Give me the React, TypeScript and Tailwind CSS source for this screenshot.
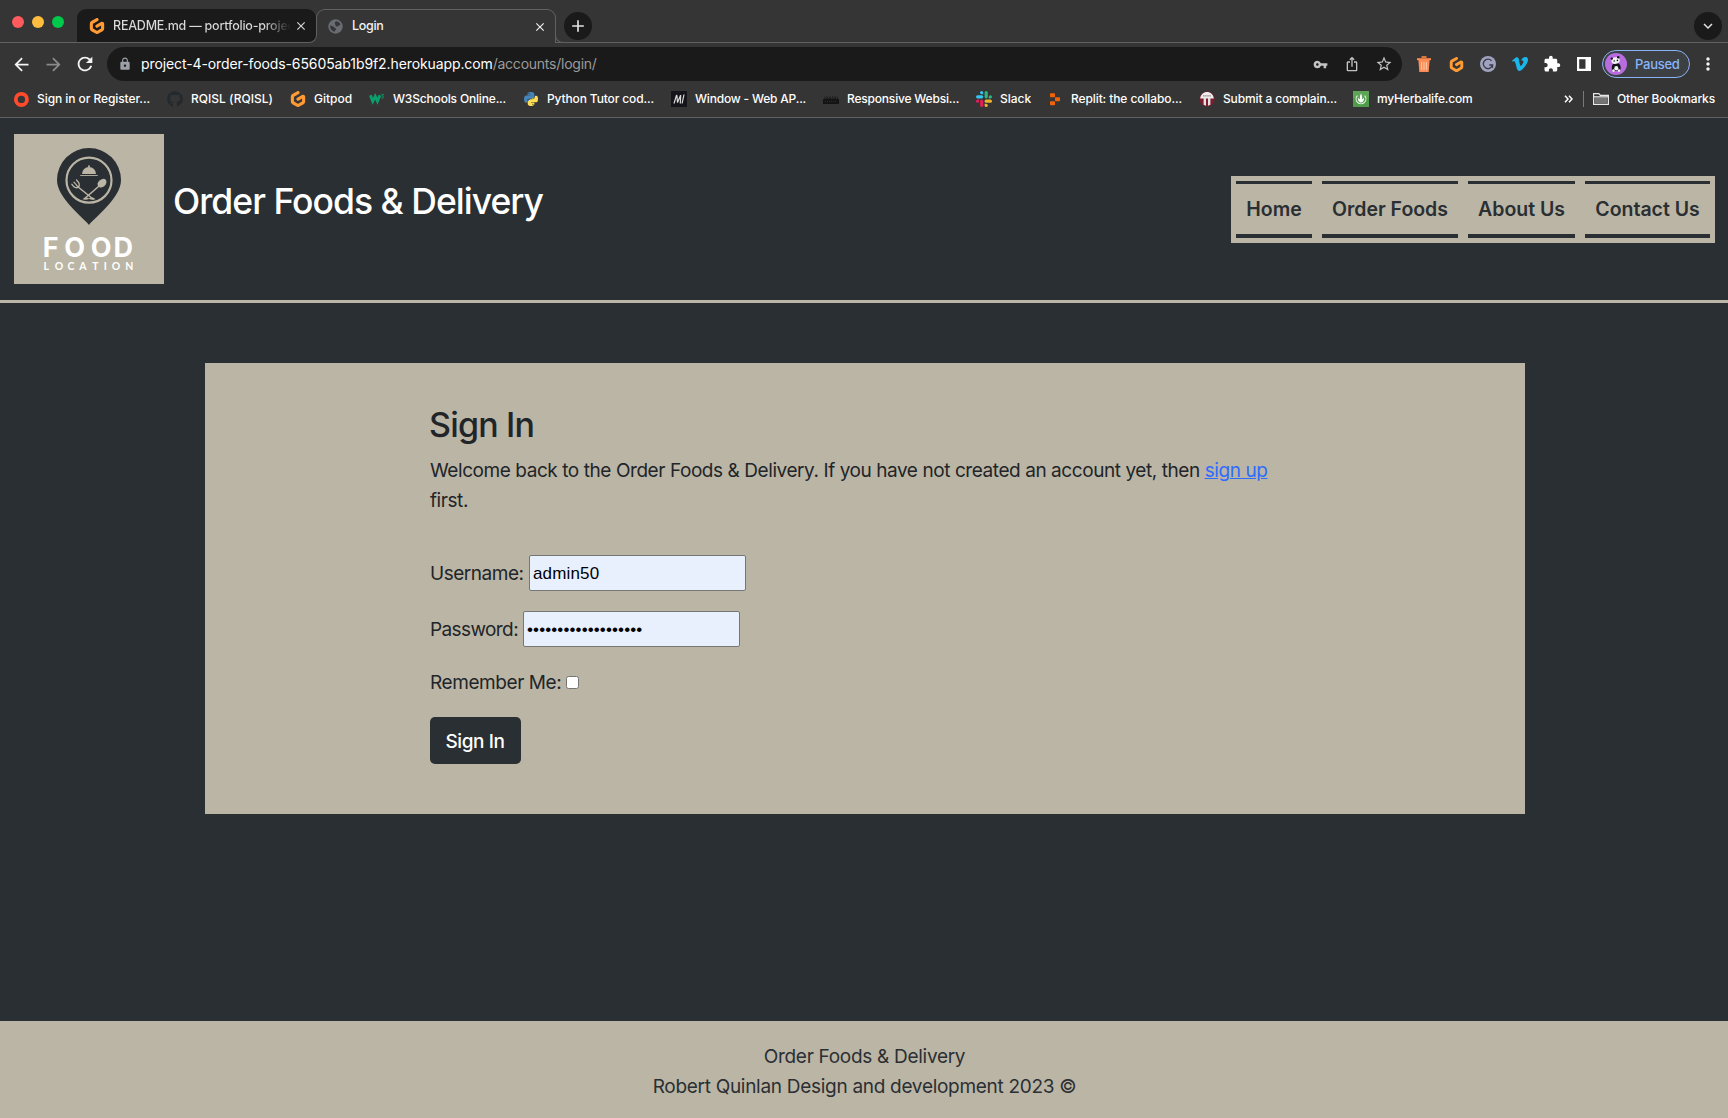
import type { ReactNode } from "react";
import {
  MdArrowBack,
  MdArrowForward,
  MdRefresh,
  MdLock,
  MdVpnKey,
  MdIosShare,
  MdStarBorder,
  MdExtension,
  MdMoreVert,
  MdClose,
  MdAdd,
  MdKeyboardArrowDown,
} from "react-icons/md";
import { FaGithub, FaPython } from "react-icons/fa";
import { SiGitpod, SiVimeo } from "react-icons/si";

function Gitpod({ size = 16 }: { size?: number }) {
  return <SiGitpod size={size} color="#ff9a35" />;
}

function GlobeIcon() {
  return (
    <svg width="15" height="15" viewBox="0 0 15 15">
      <circle cx="7.5" cy="7.5" r="7.2" fill="#696c71" />
      <path
        d="M8 2.200c2 .2 3.800 1.400 4.600 3.300-.7.9-1.800.6-2.300 1.400-.4.800-1.500.9-2.300.4-.7-.5-.3-1.400-.9-2C6.500 4.600 7 3 8 2.200zM2 6.800c1.500 0 3.200.4 4 1.500.7.9 1.900.7 2.100 1.700.2.900-1 1-1.200 1.900-.1.500-.3.800-.9.800C3.700 12 2 9.800 2 6.800z"
        fill="#35363a"
      />
    </svg>
  );
}

function OperaIcon() {
  return (
    <svg width="16" height="16" viewBox="0 0 16 16" fill="none">
      <circle cx="8.4" cy="8.4" r="5.6" stroke="#ff4b2b" strokeWidth="3.8" />
    </svg>
  );
}

function W3Icon() {
  return (
    <svg width="17" height="16" viewBox="0 0 17 16" fill="none" stroke="#0aa06e">
      <path d="M1.400 4 4 10.400 6.600 5.200 9 10.400 11.600 4" strokeWidth="3" />
      <path d="M13 3.200h2.400L14 5c1 0 1.500.5 1.500 1.100s-.6 1.200-1.400 1.200-1-.3-1.200-.6" strokeWidth=".9" />
    </svg>
  );
}

function PythonIcon() {
  return (
    <svg width="16" height="16" viewBox="0 0 16 16">
      <defs>
        <linearGradient id="py" x1="0.2" y1="0" x2="0.8" y2="1">
          <stop offset="0.5" stopColor="#4584b6" />
          <stop offset="0.5" stopColor="#ffde57" />
        </linearGradient>
      </defs>
      <FaPython size={16} fill="url(#py)" />
    </svg>
  );
}

function MdnIcon() {
  return (
    <svg width="16" height="16" viewBox="0 0 16 16">
      <rect width="16" height="16" fill="#15141a" />
      <path d="M3 12.500 5.600 3.800M5.900 4.200 6.500 11.600M6.500 11.400 9.600 4.200M9.700 4 9.300 12.500M13 3.500l-1.900 9" fill="none" stroke="#d8d8d8" strokeWidth="1.200" />
    </svg>
  );
}

function DarkBarsIcon() {
  return (
    <svg width="16" height="16" viewBox="0 0 16 16">
      <path d="M1 8V5.500h1V7h1V5.500h2V7h1V5.500h2V7h1V5h1v2h1V5.500h2V7h1V5.500h1V8z" fill="#222" />
      <rect x="0" y="8" width="16" height="5" fill="#141414" />
      <path d="M2 10.500h12" stroke="#2c2c2c" strokeDasharray="1 1" />
    </svg>
  );
}

function SlackIcon() {
  return (
    <svg width="16" height="16" viewBox="0 0 16 16">
      <g fill="#36c5f0">
        <rect x="0" y="4.200" width="7.200" height="3.200" rx="1.600" />
        <path d="M5.600 0a1.600 1.600 0 0 1 1.600 1.600v1.600H5.600a1.600 1.600 0 0 1 0-3.200z" />
      </g>
      <g fill="#2eb67d">
        <rect x="8.600" y="0" width="3.200" height="7.400" rx="1.600" />
        <path d="M12.800 7.400V5.800a1.600 1.600 0 1 1 1.600 1.600z" />
      </g>
      <g fill="#ecb22e">
        <rect x="8.600" y="8.600" width="7.400" height="3.200" rx="1.600" />
        <path d="M8.600 12.800h1.600a1.600 1.600 0 1 1-1.600 1.600z" />
      </g>
      <g fill="#e01e5a">
        <rect x="4.100" y="8.600" width="3.200" height="7.400" rx="1.600" />
        <path d="M3.200 8.600v1.600a1.600 1.600 0 1 1-1.600-1.600z" />
      </g>
    </svg>
  );
}

function ReplitIcon() {
  return (
    <svg width="16" height="16" viewBox="0 0 16 16" fill="#f26207">
      <rect x="3" y="2.300" width="5" height="4" rx=".7" />
      <rect x="8" y="6.300" width="5" height="4" rx=".7" />
      <rect x="3" y="10.300" width="5" height="4" rx=".7" />
    </svg>
  );
}

function ComplaintIcon() {
  return (
    <svg width="16" height="16" viewBox="0 0 16 16">
      <circle cx="8" cy="8" r="7.600" fill="#7d1c2e" />
      <path d="M1.200 7.400C1.600 3.400 4.600.900 8 .900s6.400 2.500 6.800 6.500z" fill="#eee" />
      <path d="M4 4.800h8" stroke="#a7868c" strokeWidth="1.200" strokeDasharray="1.600 .5" />
      <path d="M4.600 7h2.400v7.800l-2.400-1zM9 7h2.400v6.800L9 14.800z" fill="#e2e2e2" />
    </svg>
  );
}

function HerbalifeIcon() {
  return (
    <svg width="16" height="16" viewBox="0 0 16 16">
      <rect width="16" height="16" fill="#4f9c4a" />
      <rect width="16" height="7" fill="#5da657" />
      <path d="M4.400 4.600a4.900 4.900 0 1 0 7.200 0" fill="none" stroke="#e8f5e6" strokeWidth="1.100" />
      <path d="M8 2.500c1.500 2.500 1.500 6 0 8.500-1.500-2.500-1.500-6 0-8.500zM4.900 7c1.500.3 2.600 1.800 3.100 4.200C8.500 8.800 9.600 7.300 11.100 7c.1 2.500-1 4.200-3.100 4.700-2.100-.5-3.200-2.200-3.100-4.700z" fill="#fff" />
    </svg>
  );
}

function FolderIcon() {
  return (
    <svg width="16" height="14" viewBox="0 0 16 14" fill="none" stroke="#e9e9e9" strokeWidth="1.200">
      <path d="M.6 12.400V1.600h5.200l1.600 1.800h8v9z" />
      <path d="M1.600 5.400h12.800v6.200H1.600z" fill="#757575" stroke="none" />
      <path d="M.6 4.800h14.800" />
    </svg>
  );
}

function TrashIcon() {
  return (
    <svg width="16" height="18" viewBox="0 0 16 18">
      <path d="M1 3.200h14v2H1z" fill="#ff8a4c" />
      <path d="M5.500 1h5v2.200h-5z" fill="#d97742" />
      <path d="M2.400 5h11.200l-.9 12H3.300z" fill="#fa8d58" />
      <path d="M5.600 7v8M8 7v8M10.400 7v8" stroke="#ffc3a0" strokeWidth="1.100" />
    </svg>
  );
}

function GrammarlyIcon() {
  return (
    <svg width="16" height="16" viewBox="0 0 16 16" fill="none">
      <circle cx="8" cy="8" r="8" fill="#a0a3bd" />
      <path d="M11.600 4.800A4.700 4.700 0 1 0 12.600 9H9.200" stroke="#3b3d4c" strokeWidth="1.300" />
      <path d="M12.500 9v2.900" stroke="#3b3d4c" strokeWidth="1.200" />
    </svg>
  );
}

function SidePanelIcon() {
  return (
    <svg width="14" height="14" viewBox="0 0 14 14">
      <path d="M0 0h14v14H0zM2.200 2.200v9.600h6.300V2.200z" fill="#fff" fillRule="evenodd" />
    </svg>
  );
}

function PandaAvatar() {
  return (
    <svg width="22" height="22" viewBox="0 0 22 22">
      <circle cx="11" cy="11" r="11" fill="#b96be0" />
      <path d="M6.800 14c0-2.500 2-4 4.700-4s4.200 2 4.200 4.500l-.5 3.500H7z" fill="#15131a" />
      <ellipse cx="11.300" cy="15.300" rx="2" ry="2.200" fill="#f5f5f5" />
      <ellipse cx="10.600" cy="7.600" rx="4.200" ry="3.300" fill="#f3f3f3" transform="rotate(-10 10.600 7.600)" />
      <circle cx="6.800" cy="5.600" r="1.200" fill="#15131a" />
      <circle cx="13.200" cy="4.300" r="1.200" fill="#15131a" />
      <circle cx="9.200" cy="8" r=".8" fill="#15131a" />
      <circle cx="12.400" cy="7.400" r=".8" fill="#15131a" />
      <circle cx="8.500" cy="17.600" r="1.300" fill="#f3f3f3" />
      <circle cx="14" cy="17.600" r="1.300" fill="#f3f3f3" />
    </svg>
  );
}

function FoodLogo() {
  return (
    <svg width="150" height="150" viewBox="0 0 150 150" className="block">
      <rect width="150" height="150" fill="#bbb5a5" />
      <path d="M75 91C69 83 43 64 43 46a32 32 0 0 1 64 0c0 18-26 37-32 45z" fill="#2a2f33" />
      <circle cx="75" cy="46.200" r="22.500" fill="none" stroke="#bbb5a5" strokeWidth="2.200" />
      <g fill="#bbb5a5">
        <path d="M68 39.900a7 7 0 0 1 14 0z" />
        <circle cx="75" cy="32.200" r="1" />
        <rect x="66.200" y="41" width="17.600" height=".9" />
        <ellipse cx="88" cy="49.200" rx="5" ry="3.700" transform="rotate(-42 88 49.200)" />
        <path d="M68.500 65.200c2-2.300 4.500-2.300 6.500-.7 2-1.600 4.500-1.600 6.500.7-2 .7-4.500.6-6.500-.1-2 .7-4.500.8-6.500.1z" />
      </g>
      <g fill="none" stroke="#bbb5a5" strokeLinecap="round">
        <path d="M84.500 52.500 71 64.200" strokeWidth="1.500" />
        <path d="M63.500 52.500 79 65" strokeWidth="1.500" />
        <path d="M57.800 50.200c2 3.200 4.400 4.500 6.600 2.800 1.700-1.700 1-4.200-1.900-7M60 48.200l3.600 4.200" strokeWidth="1.300" />
      </g>
      <g fill="#ffffff">
        <text x="28.800 50.200 76.800 99.600" y="122.800" fontSize="27" fontWeight="700" fontFamily="Inter, sans-serif">
          FOOD
        </text>
        <text x="29.600 40.800 53.400 65.200 78.200 89.800 97.800 111.200" y="135.800" fontSize="10.500" fontWeight="700" fontFamily="Lato, sans-serif">
          LOCATION
        </text>
      </g>
    </svg>
  );
}

function Slot({ children }: { children: ReactNode }) {
  return <div className="flex w-8 shrink-0 items-center justify-center">{children}</div>;
}

function TabStrip() {
  return (
    <div className="flex h-[43px] items-end border-b border-[#606163]">
      <div className="flex h-full w-[77px] gap-2 pt-4 pl-3">
        <span className="size-3 rounded-full bg-[#ff5b5c]" />
        <span className="size-3 rounded-full bg-[#ffbd3f]" />
        <span className="size-3 rounded-full bg-[#00ca4b]" />
      </div>

      <div className="relative flex h-[33px] w-[239px] items-center rounded-t-[9px] bg-[#1a1a1a] pl-3 text-[12.5px] font-medium text-[#d6d6d6]">
        <Gitpod />
        <span className="mt-px ml-2 w-[178px] overflow-hidden bg-linear-to-r from-[#dadada] from-85% to-[#1a1a1a] bg-clip-text tracking-[-0.22px] whitespace-nowrap text-transparent">
          README.md — portfolio-project
        </span>
        <MdClose size={14} className="mt-px ml-[3px]" />
      </div>

      <div className="relative z-10 -mb-px flex h-[34px] w-[240px] items-center rounded-t-[9px] border-x border-t border-[#606163] bg-[#353535] pl-[11px] text-[12.5px] font-medium text-[#f1f1f1]">
        <span className="absolute bottom-0 -left-[9px] size-[9px] bg-[#353535]">
          <span className="block size-full rounded-br-[8px] border-r border-b border-[#606163] bg-[#1a1a1a]" />
        </span>
        <span className="absolute -right-[9px] bottom-0 size-[9px] rounded-bl-[8px] border-b border-l border-[#606163] bg-[#353535]" />
        <GlobeIcon />
        <span className="ml-[9px] flex-1 tracking-[-0.3px]">Login</span>
        <MdClose size={14} className="mr-2" />
      </div>

      <div className="mb-0.5 ml-2 flex size-7 items-center justify-center rounded-full bg-[#1a1a1a]">
        <MdAdd size={20} color="#e2e2e2" />
      </div>
      <div className="mr-1.5 mb-0.5 ml-auto flex size-7 items-center justify-center rounded-full bg-[#1a1a1a]">
        <MdKeyboardArrowDown size={18} color="#e2e2e2" />
      </div>
    </div>
  );
}

function Toolbar() {
  return (
    <div className="flex h-[38px] items-center pt-1">
      <div className="flex w-[107px] pl-[5px]">
        <Slot><MdArrowBack size={21} color="#f4f4f4" /></Slot>
        <Slot><MdArrowForward size={21} color="#8a8a8a" /></Slot>
        <Slot><MdRefresh size={22} color="#f4f4f4" /></Slot>
      </div>
      <div className="flex h-[34px] w-[1295px] items-center rounded-full bg-[#1a1a1a] pr-0.5 pl-[11px] text-sm">
        <MdLock size={14} color="#9aa0a6" />
        <span className="ml-[9px] flex-1 tracking-[-0.1px] text-white">
          project-4-order-foods-65605ab1b9f2.herokuapp.com
          <span className="tracking-[-0.24px] text-[#9a9a9a]">/accounts/login/</span>
        </span>
        <Slot><MdVpnKey size={15} color="#c4c4c4" /></Slot>
        <Slot><MdIosShare size={16} color="#c4c4c4" /></Slot>
        <Slot><MdStarBorder size={18} color="#c4c4c4" /></Slot>
      </div>
      <div className="flex pl-[6px]">
        <Slot><TrashIcon /></Slot>
        <Slot><Gitpod size={15} /></Slot>
        <Slot><GrammarlyIcon /></Slot>
        <Slot><SiVimeo size={16} color="#1ab7ea" /></Slot>
        <Slot><MdExtension size={18} color="#ffffff" /></Slot>
        <Slot><SidePanelIcon /></Slot>
      </div>
      <div className="ml-0.5 flex h-7 w-[88px] items-center rounded-full border border-[#8ab4f8] bg-[#3c4043] pl-0.5">
        <PandaAvatar />
        <span className="mt-px ml-2 text-[13px] font-medium tracking-[-0.25px] text-[#8ab4f8]">Paused</span>
      </div>
      <div className="ml-0.5"><Slot><MdMoreVert size={20} color="#f4f4f4" /></Slot></div>
    </div>
  );
}

function Bookmark({ icon, label, className }: { icon: ReactNode; label: string; className: string }) {
  return (
    <div className={`flex shrink-0 items-center gap-2 whitespace-nowrap ${className}`}>
      <span className="flex w-4 shrink-0 justify-center">{icon}</span>
      {label}
    </div>
  );
}

function BookmarksBar() {
  return (
    <div className="flex h-[37px] items-center border-b border-[#606163] pl-[13px] text-[12px] font-medium tracking-[-0.13px] text-white">
      <Bookmark className="w-[154px] tracking-[-0.07px]" icon={<OperaIcon />} label="Sign in or Register..." />
      <Bookmark className="w-[123px] tracking-[0.02px]" icon={<FaGithub size={16} color="#24292e" />} label="RQISL (RQISL)" />
      <Bookmark className="w-[79px] tracking-[0px]" icon={<Gitpod />} label="Gitpod" />
      <Bookmark className="w-[154px] tracking-[-0.17px]" icon={<W3Icon />} label="W3Schools Online..." />
      <Bookmark className="w-[148px]" icon={<PythonIcon />} label="Python Tutor cod..." />
      <Bookmark className="w-[152px] tracking-[-0.19px]" icon={<MdnIcon />} label="Window - Web AP..." />
      <Bookmark className="w-[153px] tracking-[-0.19px]" icon={<DarkBarsIcon />} label="Responsive Websi..." />
      <Bookmark className="w-[71px] tracking-[0px]" icon={<SlackIcon />} label="Slack" />
      <Bookmark className="w-[152px] tracking-[-0.1px]" icon={<ReplitIcon />} label="Replit: the collabo..." />
      <Bookmark className="w-[154px]" icon={<ComplaintIcon />} label="Submit a complain..." />
      <Bookmark className="w-[120px] tracking-[-0.19px]" icon={<HerbalifeIcon />} label="myHerbalife.com" />
      <svg width="9" height="8" viewBox="0 0 9 8" fill="none" stroke="#fff" strokeWidth="1.500" className="ml-auto">
        <path d="M1 .8 4 4 1 7.200M5 .8 8 4 5 7.200" />
      </svg>
      <span className="mr-[9px] ml-[10px] h-4 w-px bg-[#77797b]" />
      <Bookmark className="mr-[13px]" icon={<FolderIcon />} label="Other Bookmarks" />
    </div>
  );
}

function NavItem({ label, className }: { label: string; className: string }) {
  return (
    <a className={`flex h-[57px] items-center justify-center border-t-[3px] border-b-4 border-[#2a2f33] pt-0.5 ${className}`}>
      {label}
    </a>
  );
}

function SiteHeader() {
  return (
    <header className="flex h-[185px] items-start border-b-[3px] border-[#bbb5a5] px-[14px] pt-4">
      <FoodLogo />
      <h1 className="mt-[47px] ml-[9px] text-[35.5px] leading-[42px] font-medium tracking-[-0.98px] text-white">
        Order Foods &amp; Delivery
      </h1>
      <nav className="mt-[42px] mr-[-1px] ml-auto flex gap-[10px] bg-[#bbb5a5] p-[5px] text-[19.5px] font-semibold tracking-[-0.02px] text-[#2a2f33]">
        <NavItem className="w-[76px]" label="Home" />
        <NavItem className="w-[136px]" label="Order Foods" />
        <NavItem className="w-[107px]" label="About Us" />
        <NavItem className="w-[125px]" label="Contact Us" />
      </nav>
    </header>
  );
}

function LoginCard() {
  return (
    <section className="mt-[60px] ml-[205px] h-[451px] w-[1320px] bg-[#bbb5a5] pt-[41px] pl-[225px] text-[19px] leading-[30px] tracking-[-0.43px] text-[#212529]">
      <h2 className="-ml-px text-[34px] leading-[42px] font-medium tracking-[-0.8px]">Sign In</h2>
      <p className="mt-[10px] w-[860px]">
        Welcome back to the Order Foods &amp; Delivery. If you have not created an account yet, then{" "}
        <a className="text-[#2e6bff] underline">sign up</a>
        <br />
        first.
      </p>
      <form className="mt-[39px]">
        <label className="flex h-9 items-center">
          <span className="w-[99px] pt-0.5 tracking-[-0.47px]">Username:</span>
          <input
            type="text"
            defaultValue="admin50"
            className="h-9 w-[217px] rounded-[2px] border border-[#767676] bg-[#e8f0fe] px-[3px] pt-0.5 font-['Liberation_Sans',sans-serif] text-[17px] tracking-[0.15px] text-black"
          />
        </label>
        <label className="mt-5 flex h-9 items-center">
          <span className="w-[93px] pt-0.5 tracking-[-0.6px]">Password:</span>
          <input
            type="password"
            defaultValue="orderfoodsdelivery1"
            className="h-9 w-[217px] rounded-[2px] border border-[#767676] bg-[#e8f0fe] px-[3px] pt-0.5 font-['Liberation_Sans',sans-serif] text-[17px] tracking-[0.12px] text-black"
          />
        </label>
        <label className="mt-5 flex h-[30px] items-center">
          <span className="w-[136px] pt-0.5 tracking-[-0.42px]">Remember Me:</span>
          <span className="size-[13px] rounded-[2.5px] border border-[#767676] bg-white" />
        </label>
        <button
          type="button"
          className="mt-5 flex h-[47px] w-[91px] items-center justify-center rounded-[5px] bg-[#2a2f33] pt-0.5 pr-px font-medium tracking-[-0.4px] text-white"
        >
          Sign In
        </button>
      </form>
    </section>
  );
}

export default function App() {
  return (
    <div className="flex h-[1118px] w-[1728px] flex-col overflow-hidden bg-[#2a2f33] font-[Inter,sans-serif]">
      <div className="bg-[#353535]">
        <TabStrip />
        <Toolbar />
        <BookmarksBar />
      </div>
      <SiteHeader />
      <main className="flex-1">
        <LoginCard />
      </main>
      <footer className="h-[97px] bg-[#bbb5a5] pt-[21px] pl-px text-center text-[19px] leading-[30px] tracking-[-0.29px] text-[#2a2f33]">
        <p>Order Foods &amp; Delivery</p>
        <p>Robert Quinlan Design and development 2023 ©</p>
      </footer>
    </div>
  );
}
